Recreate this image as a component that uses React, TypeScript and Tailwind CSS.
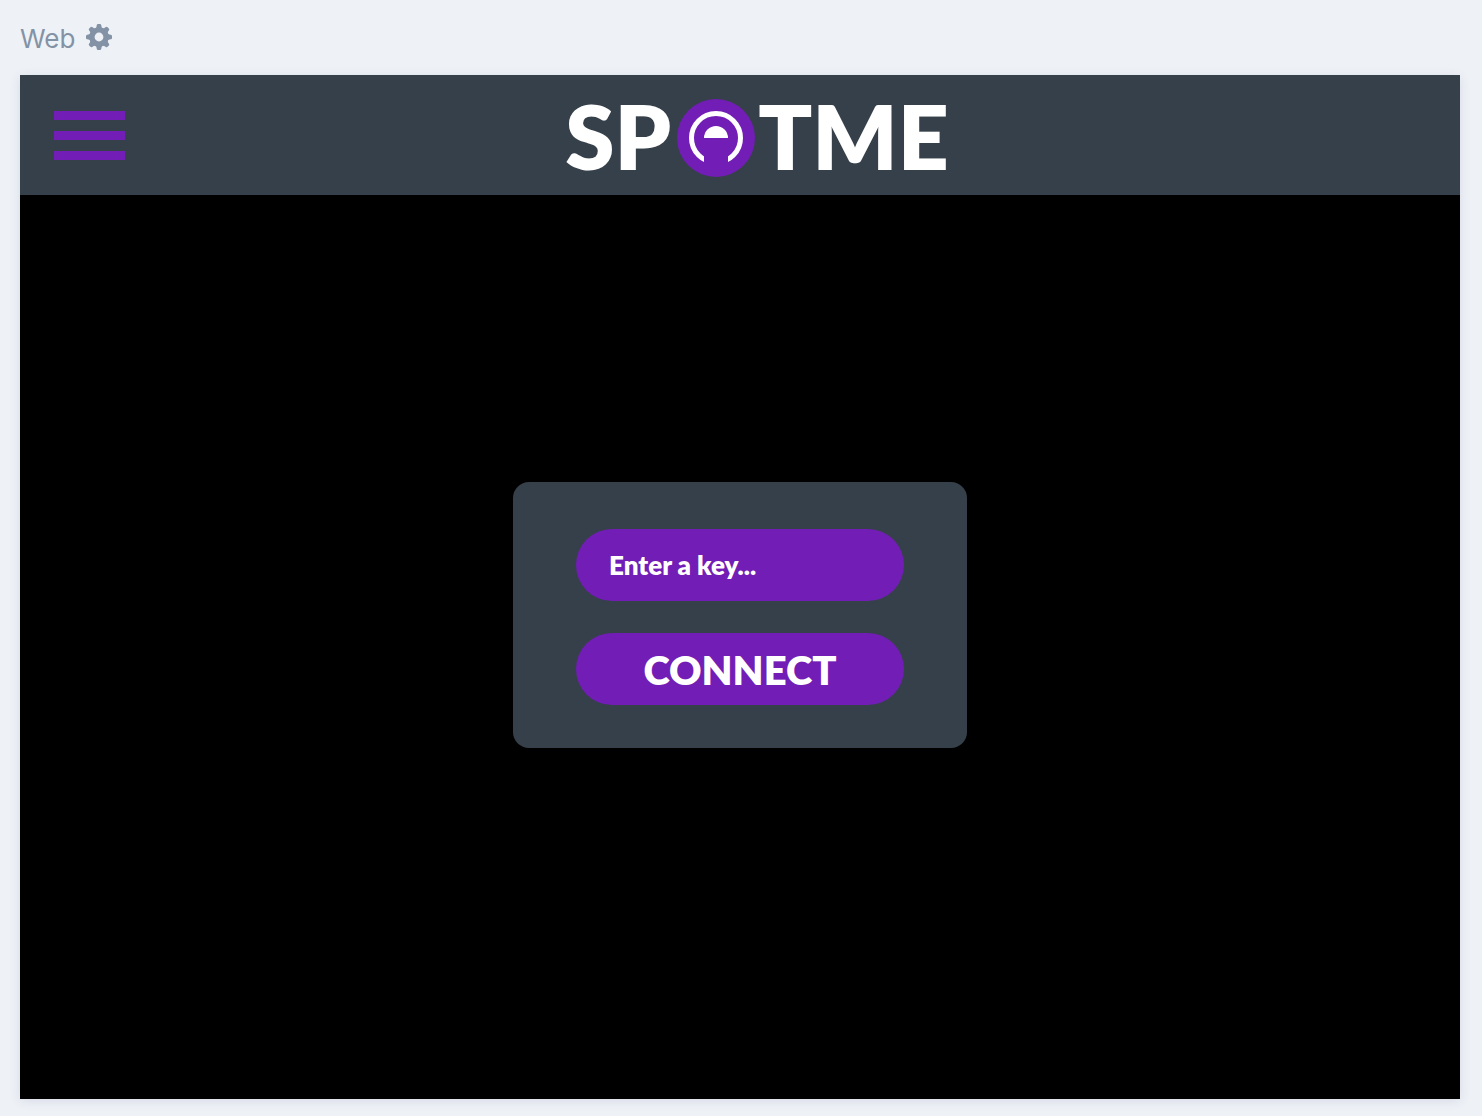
const TEETH = [0, 45, 90, 135, 180, 225, 270, 315];

function GearIcon() {
  return (
    <svg viewBox="0 0 26 26" className="size-[26px]" fill="currentColor" aria-hidden="true">
      {TEETH.map((angle) => (
        <path
          key={angle}
          d="M8.6 4.3C9.8 4.3 10.4 3.4 10.5 2.4L10.7 1.2Q10.9 0 12.1 0H13.9Q15.1 0 15.3 1.2L15.5 2.4C15.6 3.4 16.2 4.3 17.4 4.3L16 8H10Z"
          transform={`rotate(${angle} 13 13)`}
        />
      ))}
      <circle cx="13" cy="13" r="7" fill="none" stroke="currentColor" strokeWidth="5.2" />
    </svg>
  );
}

function SpotMark() {
  return (
    <svg viewBox="0 0 78 78" className="mt-1.5 mr-[3px] ml-1.5 size-[78px] shrink-0" aria-hidden="true">
      <circle cx="39" cy="39" r="39" fill="#721db5" />
      <circle cx="39" cy="39" r="24.5" fill="none" stroke="#fff" strokeWidth="5" />
      <path d="M27 50H51V70H27Z" fill="#721db5" />
      <path d="M27 39A12 12 0 0 1 51 39Z" fill="#fff" />
    </svg>
  );
}

export default function App() {
  return (
    <div className="flex min-h-screen flex-col bg-[#eef2f7] px-5 pb-[17px] font-['Lato',sans-serif]">
      <div className="flex h-[75px] items-center gap-[11px] text-[#8492a6]">
        <h1 className="pt-0.5 font-[Inter,sans-serif] text-[26px]">Web</h1>
        <button type="button" aria-label="Settings" className="pb-0.5">
          <GearIcon />
        </button>
      </div>
      <div className="mr-0.5 flex flex-1 flex-col bg-black shadow-[0_2px_10px_rgba(60,50,100,0.12)]">
        <header className="grid h-30 grid-cols-[1fr_auto_1fr] items-center bg-[#36404a] px-[34px]">
          <button type="button" aria-label="Menu" className="flex w-[71px] flex-col gap-[11px]">
            <span className="h-[9px] bg-[#721db5]" />
            <span className="h-[9px] bg-[#721db5]" />
            <span className="h-[9px] bg-[#721db5]" />
          </button>
          <div className="ml-[34px] flex items-center text-[89px] leading-none font-extrabold text-white" aria-label="SPOTME">
            <span>SP</span>
            <SpotMark />
            <span>TME</span>
          </div>
        </header>
        <main className="flex flex-1 justify-center">
          <form
            className="mt-[287px] flex w-[454px] flex-col gap-8 self-start rounded-2xl bg-[#36404a] px-[63px] pt-[47px] pb-[43px]"
            onSubmit={(event) => event.preventDefault()}
          >
            <input
              type="text"
              aria-label="Key"
              placeholder="Enter a key..."
              className="h-18 w-full rounded-full bg-[#721db5] px-[33px] text-[26px] font-extrabold text-white outline-none placeholder:text-white placeholder:opacity-100"
            />
            <button type="submit" className="h-18 rounded-full bg-[#721db5] pt-0.5 text-[40px] font-extrabold text-white">
              CONNECT
            </button>
          </form>
        </main>
      </div>
    </div>
  );
}
